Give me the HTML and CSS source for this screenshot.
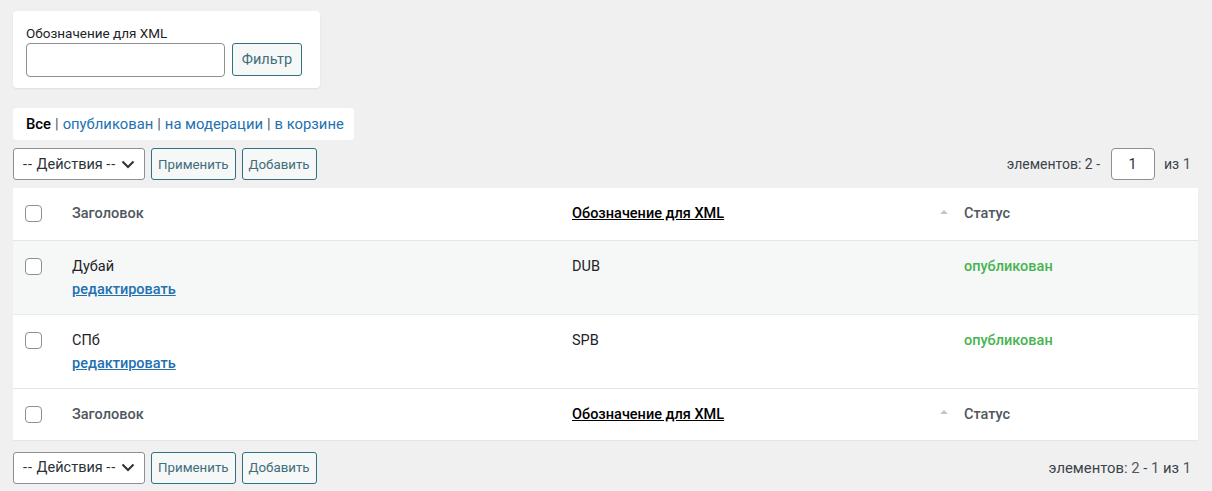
FILE: index.html
```html
<!DOCTYPE html>
<html lang="ru">
<head>
<meta charset="utf-8">
<link rel="stylesheet" href="styles.css">
</head>
<body>
<div class="page">
  <form class="filter-box">
    <label class="filter-label">Обозначение для XML</label>
    <div class="filter-row">
      <input class="text-input" type="text">
      <button class="btn btn-filter" type="button">Фильтр</button>
    </div>
  </form>

  <div class="views">
    <span class="current">Все</span><span class="sep">|</span><a href="#">опубликован</a><span class="sep">|</span><a href="#">на модерации</a><span class="sep">|</span><a href="#">в корзине</a>
  </div>

  <div class="tablenav top">
    <div class="actions">
      <div class="select"><span><span class="dash">--</span> Действия <span class="dash">--</span></span><svg width="14" height="9" viewBox="0 0 14 9"><path d="M1.5 1.5 L7 7 L12.5 1.5" fill="none" stroke="#2c3338" stroke-width="2"/></svg></div>
      <button class="btn" type="button">Применить</button>
      <button class="btn" type="button">Добавить</button>
    </div>
    <div class="pages">элементов: 2 - <input class="page-input" type="text" value="1"> из <span class="num">1</span></div>
  </div>

  <table class="list">
    <thead>
      <tr>
        <th class="cb"><span class="checkbox"></span></th>
        <th class="col-title">Заголовок</th>
        <th class="col-xml"><div class="sort"><a href="#">Обозначение для XML</a><span class="arrow"></span></div></th>
        <th class="col-status">Статус</th>
      </tr>
    </thead>
    <tbody>
      <tr class="alt">
        <td class="cb"><span class="checkbox"></span></td>
        <td class="col-title"><div class="name">Дубай</div><a class="edit" href="#">редактировать</a></td>
        <td class="col-xml">DUB</td>
        <td class="col-status"><span class="pub">опубликован</span></td>
      </tr>
      <tr>
        <td class="cb"><span class="checkbox"></span></td>
        <td class="col-title"><div class="name">СПб</div><a class="edit" href="#">редактировать</a></td>
        <td class="col-xml">SPB</td>
        <td class="col-status"><span class="pub">опубликован</span></td>
      </tr>
    </tbody>
    <tfoot>
      <tr>
        <th class="cb"><span class="checkbox"></span></th>
        <th class="col-title">Заголовок</th>
        <th class="col-xml"><div class="sort"><a href="#">Обозначение для XML</a><span class="arrow"></span></div></th>
        <th class="col-status">Статус</th>
      </tr>
    </tfoot>
  </table>

  <div class="tablenav bottom">
    <div class="actions">
      <div class="select"><span><span class="dash">--</span> Действия <span class="dash">--</span></span><svg width="14" height="9" viewBox="0 0 14 9"><path d="M1.5 1.5 L7 7 L12.5 1.5" fill="none" stroke="#2c3338" stroke-width="2"/></svg></div>
      <button class="btn" type="button">Применить</button>
      <button class="btn" type="button">Добавить</button>
    </div>
    <div class="pages">элементов: <span class="num">2</span> - <span class="num">1</span> из <span class="num">1</span></div>
  </div>
</div>
</body>
</html>
```

FILE: styles.css
```css
* { box-sizing: border-box; }
html, body { margin: 0; padding: 0; }
body {
  background: #f0f0f1;
  font-family: Roboto, "Liberation Sans", sans-serif;
  font-size: 14.5px;
  color: #3c434a;
  font-variant-ligatures: none;
  font-feature-settings: "liga" 0, "calt" 0;
}
.page { padding: 11px 14px 0 13px; }

.filter-box {
  width: 307px;
  height: 77px;
  background: #fff;
  border-radius: 4px;
  box-shadow: 0 1px 2px rgba(0,0,0,0.08);
  padding: 14px 13px 0 13px;
  margin: 0;
}
.filter-label {
  display: block;
  font-size: 13.5px;
  color: #1d2327;
  line-height: 16px;
  margin-bottom: 2px;
}
.filter-row { display: flex; gap: 7px; align-items: flex-start; }
.text-input {
  width: 199px;
  height: 34px;
  border: 1px solid #8c8f94;
  border-radius: 4px;
  background: #fff;
  margin: 0;
}
.btn {
  font-family: inherit;
  font-size: 13.3px;
  color: #3e6f7b;
  background: #f6f7f7;
  border: 1px solid #2f7181;
  border-radius: 3px;
  height: 32px;
  padding: 0 6px;
  cursor: pointer;
  margin: 0;
}
.btn-filter { width: 70px; height: 33px; font-size: 14.5px; }

.views {
  margin-top: 20px;
  width: 341px;
  height: 32px;
  background: #fff;
  border-radius: 3px;
  display: flex;
  align-items: center;
  padding-left: 13px;
  font-size: 14.8px;
}
.views .current { color: #000; font-weight: 500; }
.views .sep { color: #50575e; margin: 0 4px; }
.views a { color: #2271b1; text-decoration: none; }

.tablenav {
  display: flex;
  justify-content: space-between;
  align-items: center;
}
.tablenav.top { margin-top: 8px; height: 32px; }
.tablenav.bottom { margin-top: 11px; height: 33px; }
.actions { display: flex; gap: 6px; align-items: center; }
.select {
  width: 132px;
  height: 32px;
  border: 1px solid #8c8f94;
  border-radius: 3px;
  background: #fff;
  display: flex;
  align-items: center;
  justify-content: space-between;
  padding: 0 9px 0 9px;
  font-size: 14.5px;
  color: #2c3338;
}
.dash { letter-spacing: 1px; }
.actions .btn { height: 32px; }
.pages {
  display: flex;
  align-items: center;
  font-size: 14px;
  color: #3c434a;
  padding-right: 7px;
  white-space: pre;
}
.pages .num { color: #50575e; font-size: 14.8px; }
.tablenav.bottom .pages { font-size: 14.8px; }
.page-input {
  width: 44px;
  height: 32px;
  border: 1px solid #8c8f94;
  border-radius: 4px;
  background: #fff;
  text-align: center;
  font-family: inherit;
  font-size: 14.5px;
  color: #2c3338;
  margin: 0 6px 0 7px;
  padding: 0;
}

.list {
  margin-top: 8px;
  width: 1185px;
  border-collapse: collapse;
  background: #fff;
  table-layout: fixed;
  box-shadow: 0 1px 1px rgba(0,0,0,0.04);
}
.list th, .list td { text-align: left; vertical-align: top; padding: 0; }
.list thead tr, .list tfoot tr { height: 52px; }
.list thead th, .list tfoot th {
  vertical-align: middle;
  font-weight: 500;
  font-size: 14.5px;
  color: #50575e;
}
.list thead tr { border-bottom: 1px solid #e4e5e7; }
.list tfoot tr { border-top: 1px solid #e4e5e7; }
.list tbody tr { height: 74px; border-bottom: 1px solid #e8e9ea; }
.list tbody tr:last-child { border-bottom: none; }
.list tbody tr.alt { background: #f6f7f7; }

.cb { width: 49px; padding-left: 12px !important; }
.col-title { width: 500px; padding-left: 10px !important; }
.col-xml { width: 392px; padding-left: 10px !important; }
.col-status { padding-left: 10px !important; }

.list tbody td { padding-top: 18px !important; }
.list tbody td.cb { padding-top: 17px !important; }

.checkbox {
  display: block;
  width: 17px;
  height: 17px;
  border: 1px solid #8c8f94;
  border-radius: 4px;
  background: #fff;
}

.sort { display: flex; justify-content: space-between; align-items: center; padding-right: 6px; }
.sort a { color: #000; text-decoration: underline; font-weight: 500; }
.arrow {
  width: 0; height: 0;
  border-left: 4px solid transparent;
  border-right: 4px solid transparent;
  border-bottom: 4px solid #c3c4c7;
  margin-top: -4px;
}

.name { color: #1d2327; line-height: 16px; }
.edit {
  display: inline-block;
  margin-top: 7px;
  color: #2271b1;
  font-weight: 500;
  text-decoration: underline;
  line-height: 16px;
}
.list tbody .col-xml { color: #1d2327; line-height: 16px; }
.pub { color: #46b450; font-weight: 500; line-height: 16px; display: block; }
```
